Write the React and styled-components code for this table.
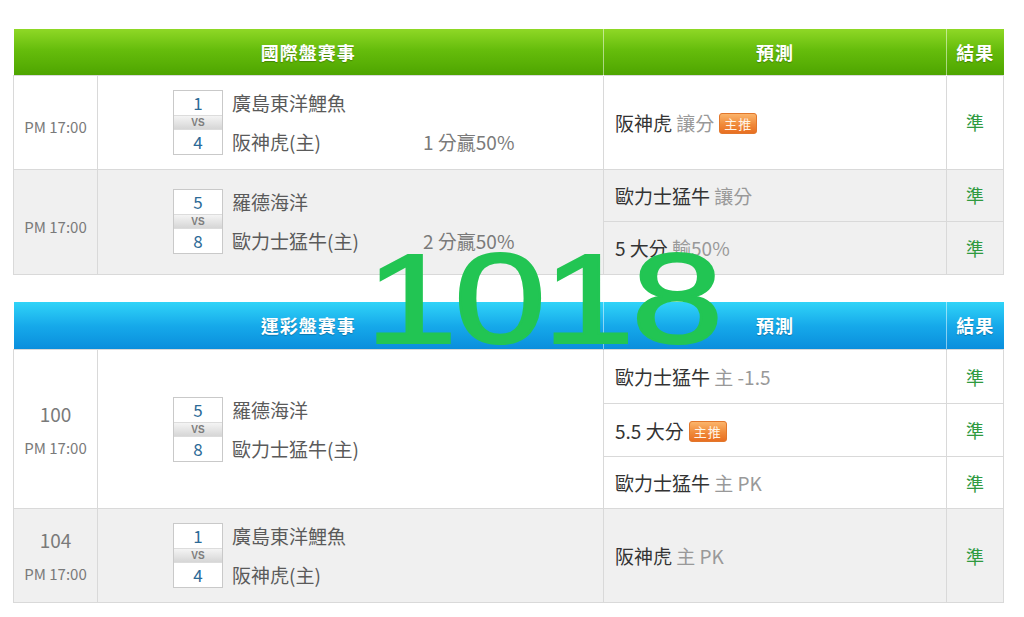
import React from "react";
import styled, { createGlobalStyle, css } from "styled-components";

const GlobalStyle = createGlobalStyle`
  html, body {
    margin: 0;
    padding: 0;
    background: #ffffff;
  }
  body {
    font-family: "Noto Sans CJK TC", "Noto Sans", sans-serif;
    color: #444;
  }
`;

const Page = styled.div`
  position: relative;
  width: 1024px;
  padding: 29px 0 0 13px;
  box-sizing: border-box;
`;

const Board = styled.table`
  width: 990px;
  border-collapse: collapse;
  table-layout: fixed;
  margin-bottom: 27px;
`;

const headTones = {
  green: css`
    background: linear-gradient(to bottom, #8fd826 0%, #66bd0c 45%, #4ea500 100%);
  `,
  blue: css`
    background: linear-gradient(to bottom, #30d4f8 0%, #16a9ea 50%, #0a8ddc 100%);
  `,
};

const HeadRow = styled.tr`
  height: ${(p) => p.$h}px;
  ${(p) => headTones[p.$tone]}
`;

const HeadCell = styled.th`
  padding: 0;
  color: #ffffff;
  font-size: 18px;
  font-weight: 700;
  letter-spacing: 1px;
  text-align: center;
  text-shadow: 0 1px 1px rgba(0, 0, 0, 0.25);
  border-left: 1px solid rgba(255, 255, 255, 0.5);
  &:first-child {
    border-left: none;
  }
`;

const Row = styled.tr`
  height: ${(p) => p.$h}px;
  background: ${(p) => (p.$alt ? "#f0f0f0" : "#ffffff")};
`;

const Cell = styled.td`
  border: 1px solid #d9d9d9;
  padding: 0;
  vertical-align: middle;
`;

const TimeCell = styled(Cell)`
  text-align: center;
  color: #7a7a7a;
`;

const Code = styled.div`
  font-size: 19px;
  line-height: 26px;
  margin-bottom: 11px;
`;

const Clock = styled.div`
  font-size: 15px;
  line-height: 20px;
  padding-top: ${(p) => (p.$solo ? 10 : 0)}px;
`;

const MatchWrap = styled.div`
  display: flex;
  align-items: stretch;
  padding-left: 75px;
`;

const ScoreBox = styled.div`
  width: 48px;
  border: 1px solid #c9c9c9;
  background: #ffffff;
  display: flex;
  flex-direction: column;
`;

const Score = styled.div`
  height: 24px;
  line-height: 24px;
  text-align: center;
  font-size: 17px;
  color: #2c6a97;
`;

const Vs = styled.div`
  height: 13px;
  line-height: 13px;
  border-top: 1px solid #dcdcdc;
  border-bottom: 1px solid #dcdcdc;
  background: linear-gradient(to bottom, #f4f4f4, #d6d6d6);
  text-align: center;
  font-family: "Liberation Sans", Arial, sans-serif;
  font-size: 10px;
  font-weight: 700;
  color: #7d7d7d;
`;

const Teams = styled.div`
  width: 191px;
  margin-left: 9px;
  padding-top: 1px;
  display: flex;
  flex-direction: column;
  gap: 15px;
`;

const Team = styled.div`
  height: 24px;
  line-height: 24px;
  font-size: 19px;
  color: #5a5a5a;
  white-space: nowrap;
`;

const Note = styled.div`
  align-self: flex-end;
  height: 24px;
  line-height: 24px;
  padding-bottom: 1px;
  font-size: 19px;
  color: #7a7a7a;
  white-space: nowrap;
`;

const PickCell = styled(Cell)`
  padding-left: 11px;
  font-size: 19px;
  color: #333;
  white-space: nowrap;
`;

const Dim = styled.span`
  color: #999;
`;

const Badge = styled.span`
  display: inline-block;
  vertical-align: 2px;
  margin-left: 5px;
  width: 36px;
  height: 19px;
  line-height: 19px;
  border: 1px solid #e2772c;
  border-radius: 3px;
  background: linear-gradient(to bottom, #fbb46b 0%, #f08a3a 55%, #e86f22 100%);
  color: #fff4e6;
  font-size: 13px;
  text-align: center;
  letter-spacing: 1px;
`;

const ResultCell = styled(Cell)`
  text-align: center;
  font-size: 18px;
  color: #2f9a3f;
`;

/* hand-written date mark laid over the tables */
const Stamp = styled.div`
  position: absolute;
  left: 365px;
  top: 235px;
  font-family: "Liberation Sans", Arial, sans-serif;
  font-size: 128px;
  font-weight: 400;
  line-height: 1;
  letter-spacing: -3px;
  color: #22c553;
  -webkit-text-stroke: 2px #22c553;
  transform: scaleX(1.3);
  transform-origin: left top;
  pointer-events: none;
`;

const Match = ({ home, away, top, bottom, note }) => (
  <MatchWrap>
    <ScoreBox>
      <Score>{top}</Score>
      <Vs>VS</Vs>
      <Score>{bottom}</Score>
    </ScoreBox>
    <Teams>
      <Team>{home}</Team>
      <Team>{away}</Team>
    </Teams>
    {note && <Note>{note}</Note>}
  </MatchWrap>
);

const Time = ({ code }) => (
  <>
    {code && <Code>{code}</Code>}
    <Clock $solo={!code}>PM 17:00</Clock>
  </>
);

const Cols = () => (
  <colgroup>
    <col style={{ width: 84 }} />
    <col style={{ width: 506 }} />
    <col style={{ width: 343 }} />
    <col style={{ width: 57 }} />
  </colgroup>
);

const Head = ({ title, tone, h }) => (
  <thead>
    <HeadRow $tone={tone} $h={h}>
      <HeadCell colSpan={2}>{title}</HeadCell>
      <HeadCell>預測</HeadCell>
      <HeadCell>結果</HeadCell>
    </HeadRow>
  </thead>
);

export default function App() {
  return (
    <Page>
      <GlobalStyle />
      <Board>
        <Cols />
        <Head title="國際盤賽事" tone="green" h={46} />
        <tbody>
          <Row $h={94}>
            <TimeCell>
              <Time />
            </TimeCell>
            <Cell>
              <Match home="廣島東洋鯉魚" away="阪神虎(主)" top="1" bottom="4" note="1 分贏50%" />
            </Cell>
            <PickCell>
              阪神虎 <Dim>讓分</Dim>
              <Badge>主推</Badge>
            </PickCell>
            <ResultCell>準</ResultCell>
          </Row>
          <Row $alt $h={52}>
            <TimeCell rowSpan={2}>
              <Time />
            </TimeCell>
            <Cell rowSpan={2}>
              <Match home="羅德海洋" away="歐力士猛牛(主)" top="5" bottom="8" note="2 分贏50%" />
            </Cell>
            <PickCell>
              歐力士猛牛 <Dim>讓分</Dim>
            </PickCell>
            <ResultCell>準</ResultCell>
          </Row>
          <Row $alt $h={53}>
            <PickCell>
              5 大分 <Dim>輸50%</Dim>
            </PickCell>
            <ResultCell>準</ResultCell>
          </Row>
        </tbody>
      </Board>

      <Board>
        <Cols />
        <Head title="運彩盤賽事" tone="blue" h={48} />
        <tbody>
          <Row $h={54}>
            <TimeCell rowSpan={3}>
              <Time code="100" />
            </TimeCell>
            <Cell rowSpan={3}>
              <Match home="羅德海洋" away="歐力士猛牛(主)" top="5" bottom="8" />
            </Cell>
            <PickCell>
              歐力士猛牛 <Dim>主 -1.5</Dim>
            </PickCell>
            <ResultCell>準</ResultCell>
          </Row>
          <Row $h={53}>
            <PickCell>
              5.5 大分
              <Badge>主推</Badge>
            </PickCell>
            <ResultCell>準</ResultCell>
          </Row>
          <Row $h={52}>
            <PickCell>
              歐力士猛牛 <Dim>主 PK</Dim>
            </PickCell>
            <ResultCell>準</ResultCell>
          </Row>
          <Row $alt $h={94}>
            <TimeCell>
              <Time code="104" />
            </TimeCell>
            <Cell>
              <Match home="廣島東洋鯉魚" away="阪神虎(主)" top="1" bottom="4" />
            </Cell>
            <PickCell>
              阪神虎 <Dim>主 PK</Dim>
            </PickCell>
            <ResultCell>準</ResultCell>
          </Row>
        </tbody>
      </Board>

      <Stamp>1018</Stamp>
    </Page>
  );
}
